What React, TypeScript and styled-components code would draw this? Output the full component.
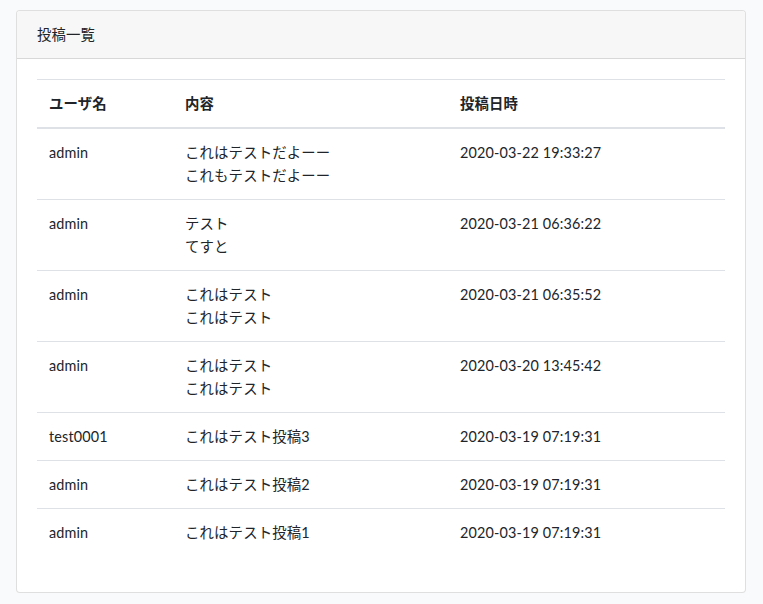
import React from "react";
import styled, { createGlobalStyle } from "styled-components";

const Global = createGlobalStyle`
  *, *::before, *::after { box-sizing: border-box; }
  html, body { margin: 0; padding: 0; background: #f8fafc; }
  body {
    font-family: "Lato", "Noto Sans CJK JP", sans-serif;
    font-size: 14.4px;
    line-height: 1.6;
    color: #212529;
    letter-spacing: 0.15px;
  }
`;

const Page = styled.div`
  padding: 10px 17px 12px 16px;
`;

const Card = styled.div`
  background: #fff;
  border: 1px solid rgba(0, 0, 0, 0.125);
  border-radius: 4px;
  overflow: hidden;
`;

const CardHeader = styled.div`
  background: #f7f7f7;
  border-bottom: 1px solid rgba(0, 0, 0, 0.125);
  padding: 12px 20px;
  height: 48px;
  line-height: 23px;
`;

const CardBody = styled.div`
  padding: 20px;
`;

const Table = styled.table`
  width: 100%;
  border-collapse: collapse;
  margin-bottom: 16px;
  table-layout: fixed;
`;

const Th = styled.th<{ $w: number }>`
  width: ${(p) => p.$w}px;
  text-align: left;
  font-weight: 700;
  padding: 12px;
  line-height: 23px;
  border-top: 1px solid #dee2e6;
  border-bottom: 2px solid #dee2e6;
  vertical-align: bottom;
`;

const Td = styled.td`
  padding: 12px;
  line-height: 23px;
  border-top: 1px solid #dee2e6;
  vertical-align: top;
`;

const Row = styled.tr`
  &:first-child td { border-top: none; }
`;

const posts = [
  { user: "admin", body: ["これはテストだよーー", "これもテストだよーー"], date: "2020-03-22 19:33:27" },
  { user: "admin", body: ["テスト", "てすと"], date: "2020-03-21 06:36:22" },
  { user: "admin", body: ["これはテスト", "これはテスト"], date: "2020-03-21 06:35:52" },
  { user: "admin", body: ["これはテスト", "これはテスト"], date: "2020-03-20 13:45:42" },
  { user: "test0001", body: ["これはテスト投稿3"], date: "2020-03-19 07:19:31" },
  { user: "admin", body: ["これはテスト投稿2"], date: "2020-03-19 07:19:31" },
  { user: "admin", body: ["これはテスト投稿1"], date: "2020-03-19 07:19:31" },
];

export default function App() {
  return (
    <>
      <Global />
      <Page>
        <Card>
          <CardHeader>投稿一覧</CardHeader>
          <CardBody>
            <Table>
              <thead>
                <tr>
                  <Th $w={136}>ユーザ名</Th>
                  <Th $w={275}>内容</Th>
                  <Th $w={277}>投稿日時</Th>
                </tr>
              </thead>
              <tbody>
                {posts.map((p, i) => (
                  <Row key={i}>
                    <Td>{p.user}</Td>
                    <Td>
                      {p.body.map((l, j) => (
                        <React.Fragment key={j}>
                          {j > 0 && <br />}
                          {l}
                        </React.Fragment>
                      ))}
                    </Td>
                    <Td>{p.date}</Td>
                  </Row>
                ))}
              </tbody>
            </Table>
          </CardBody>
        </Card>
      </Page>
    </>
  );
}
